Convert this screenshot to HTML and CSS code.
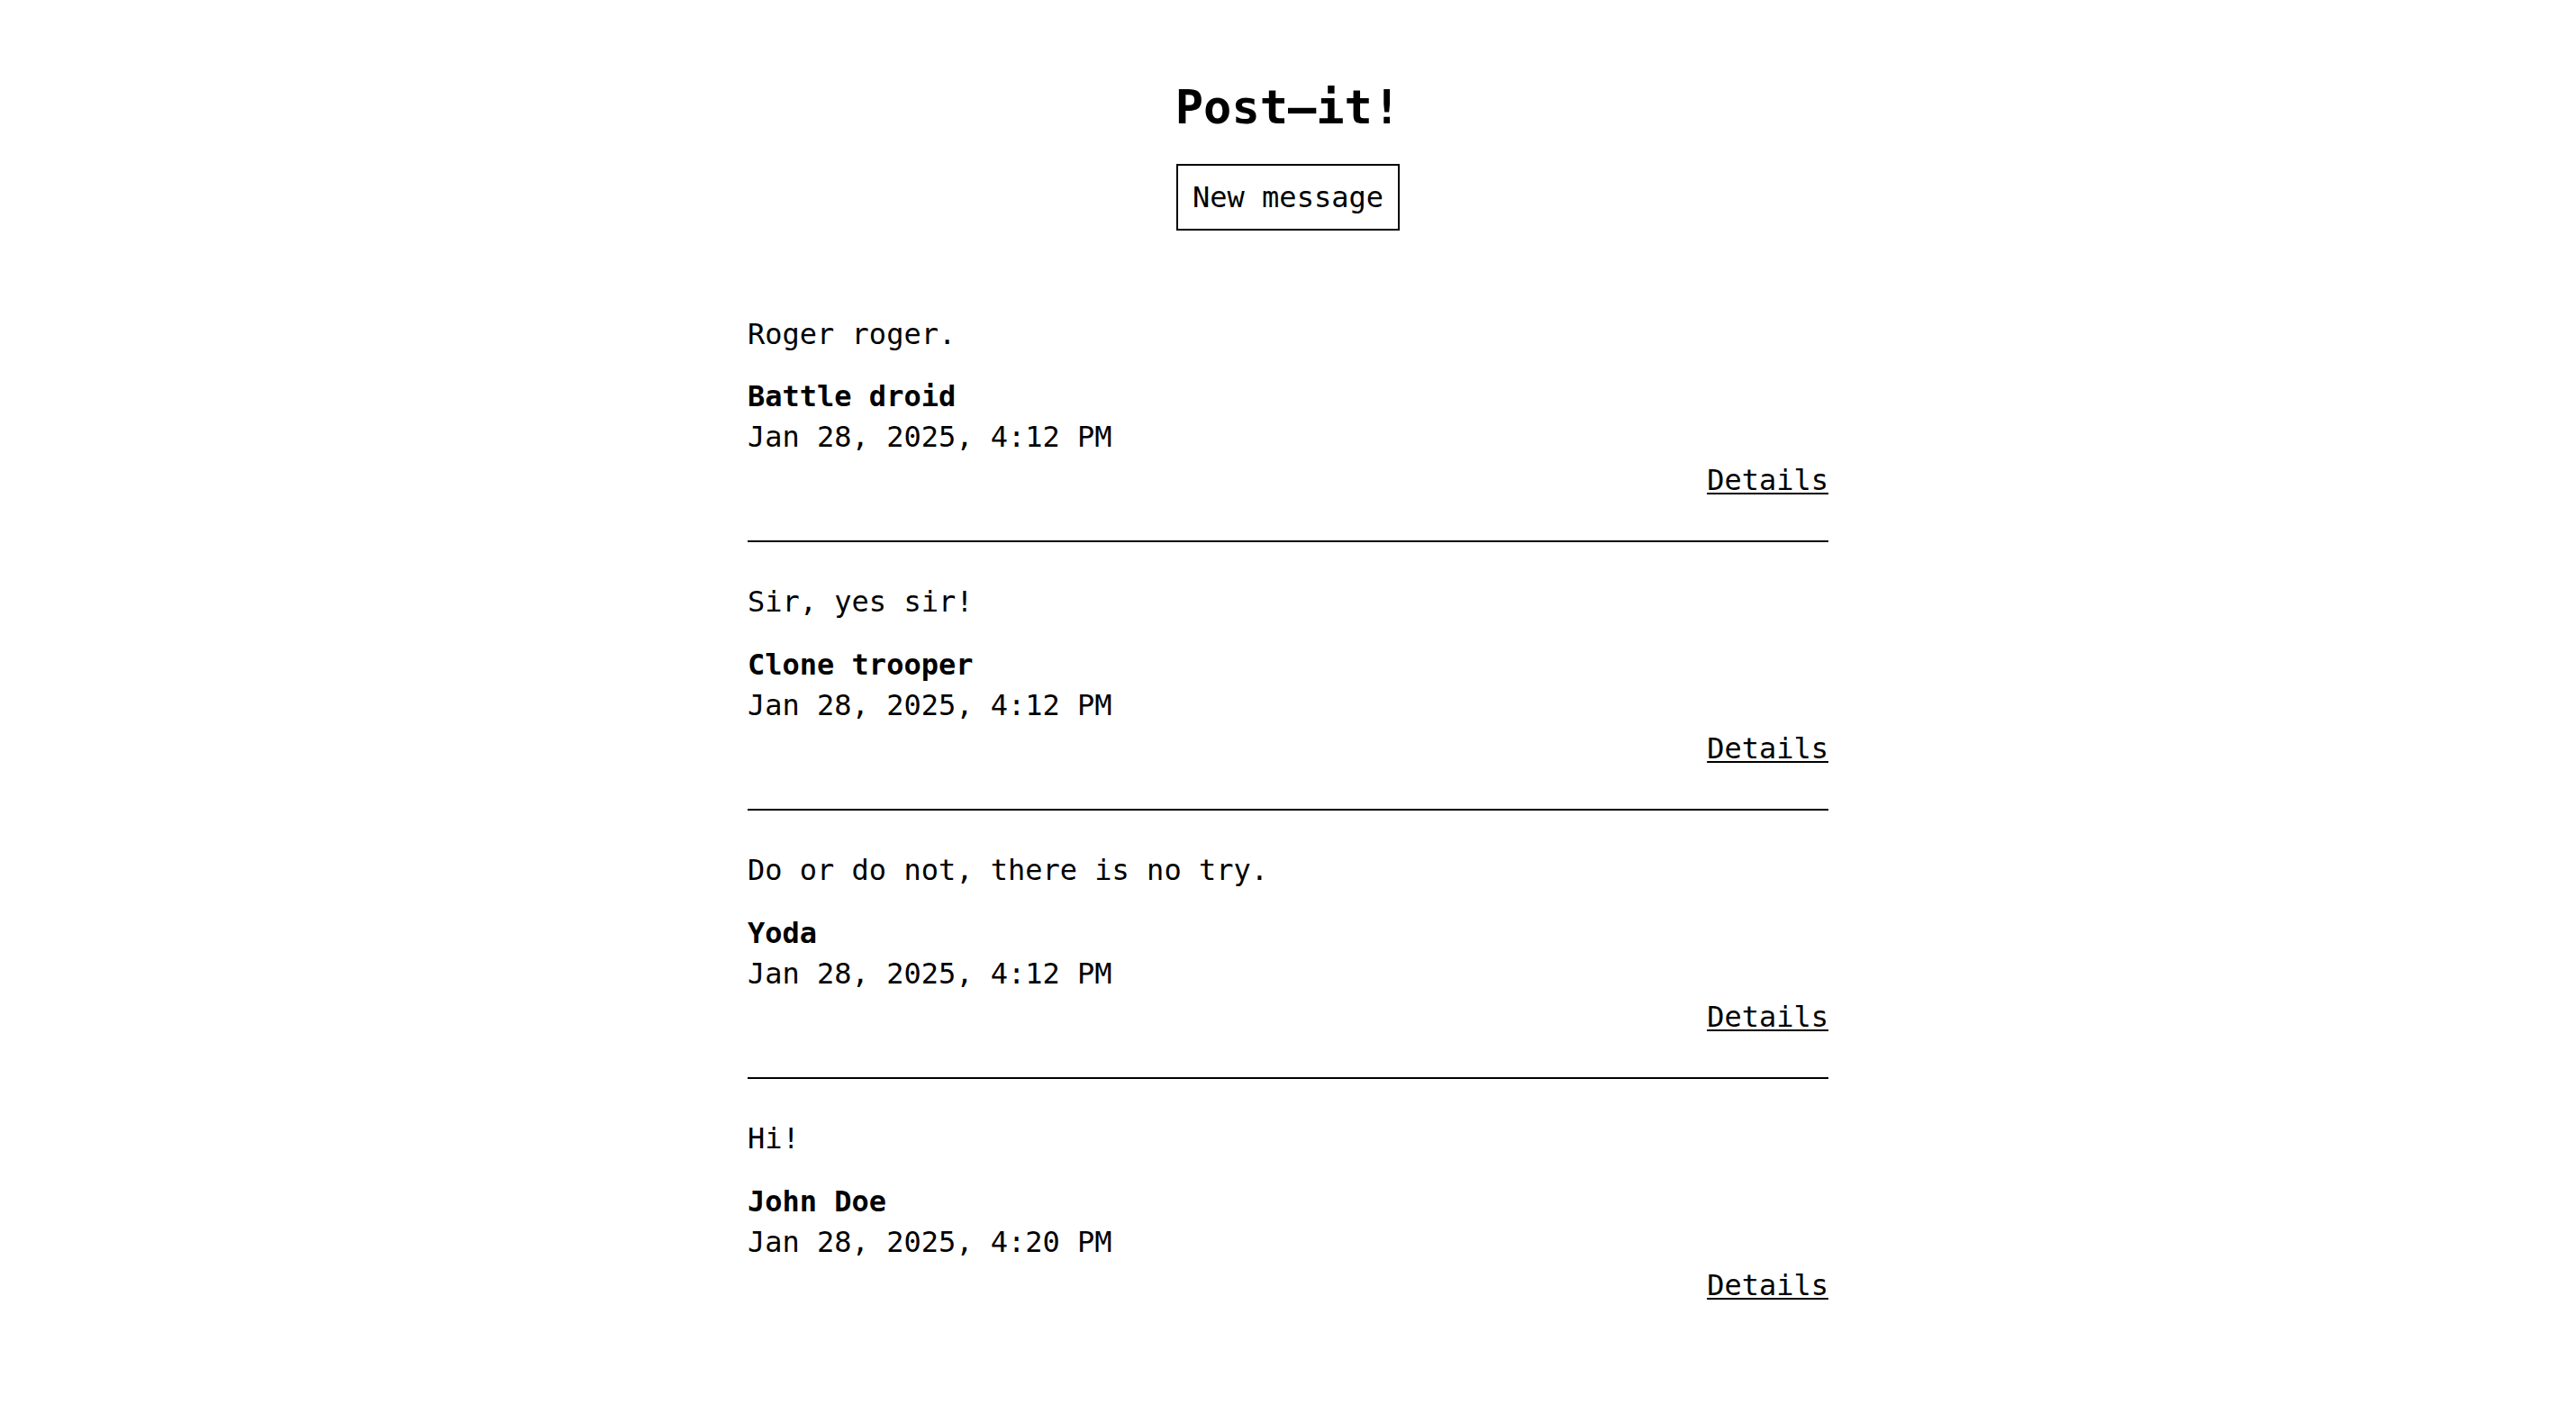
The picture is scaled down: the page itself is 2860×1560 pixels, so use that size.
FILE: index.html
```html
<!DOCTYPE html>
<html lang="en">
<head>
<meta charset="utf-8">
<title>Post-it!</title>
<link rel="stylesheet" href="styles.css">
</head>
<body>
<header class="header">
  <h1 class="title">Post–it!</h1>
  <button class="new-btn" type="button">New message</button>
</header>
<main class="messages">
  <article class="message">
    <p class="message-text">Roger roger.</p>
    <div class="meta">
      <strong class="author">Battle droid</strong>
      <time class="date">Jan 28, 2025, 4:12 PM</time>
    </div>
    <div class="actions"><a class="details" href="#">Details</a></div>
  </article>
  <article class="message">
    <p class="message-text">Sir, yes sir!</p>
    <div class="meta">
      <strong class="author">Clone trooper</strong>
      <time class="date">Jan 28, 2025, 4:12 PM</time>
    </div>
    <div class="actions"><a class="details" href="#">Details</a></div>
  </article>
  <article class="message">
    <p class="message-text">Do or do not, there is no try.</p>
    <div class="meta">
      <strong class="author">Yoda</strong>
      <time class="date">Jan 28, 2025, 4:12 PM</time>
    </div>
    <div class="actions"><a class="details" href="#">Details</a></div>
  </article>
  <article class="message">
    <p class="message-text">Hi!</p>
    <div class="meta">
      <strong class="author">John Doe</strong>
      <time class="date">Jan 28, 2025, 4:20 PM</time>
    </div>
    <div class="actions"><a class="details" href="#">Details</a></div>
  </article>
</main>
</body>
</html>
```
FILE: styles.css
```css
html, body {
  margin: 0;
  padding: 0;
  background: #ffffff;
  color: #000000;
}

body {
  font-family: "DejaVu Sans Mono", "Liberation Mono", monospace;
  font-size: 32px;
}

.header {
  display: flex;
  flex-direction: column;
  align-items: center;
  padding-top: 89px;
}

.title {
  margin: 0;
  font-size: 52px;
  font-weight: bold;
  line-height: normal;
}

.new-btn {
  margin-top: 33px;
  font-family: "DejaVu Sans Mono", "Liberation Mono", monospace;
  font-size: 32px;
  line-height: normal;
  padding: 16px;
  border: 2px solid #000000;
  background: #ffffff;
  color: #000000;
  border-radius: 0;
  cursor: pointer;
}

.messages {
  width: 1200px;
  margin: 48px auto 0;
}

.message {
  padding: 44.5px 0 44.5px;
  border-bottom: 2px solid #000000;
  line-height: 1.4;
}

.message:last-child {
  border-bottom: none;
}

.message-text {
  margin: 0 0 25px;
}

.meta {
  display: flex;
  flex-direction: column;
}

.author {
  font-weight: bold;
}

.actions {
  text-align: right;
  padding-top: 2.8px;
}

.details {
  color: #000000;
  text-decoration: underline;
  text-decoration-thickness: 2px;
  text-underline-offset: 3px;
}
```
